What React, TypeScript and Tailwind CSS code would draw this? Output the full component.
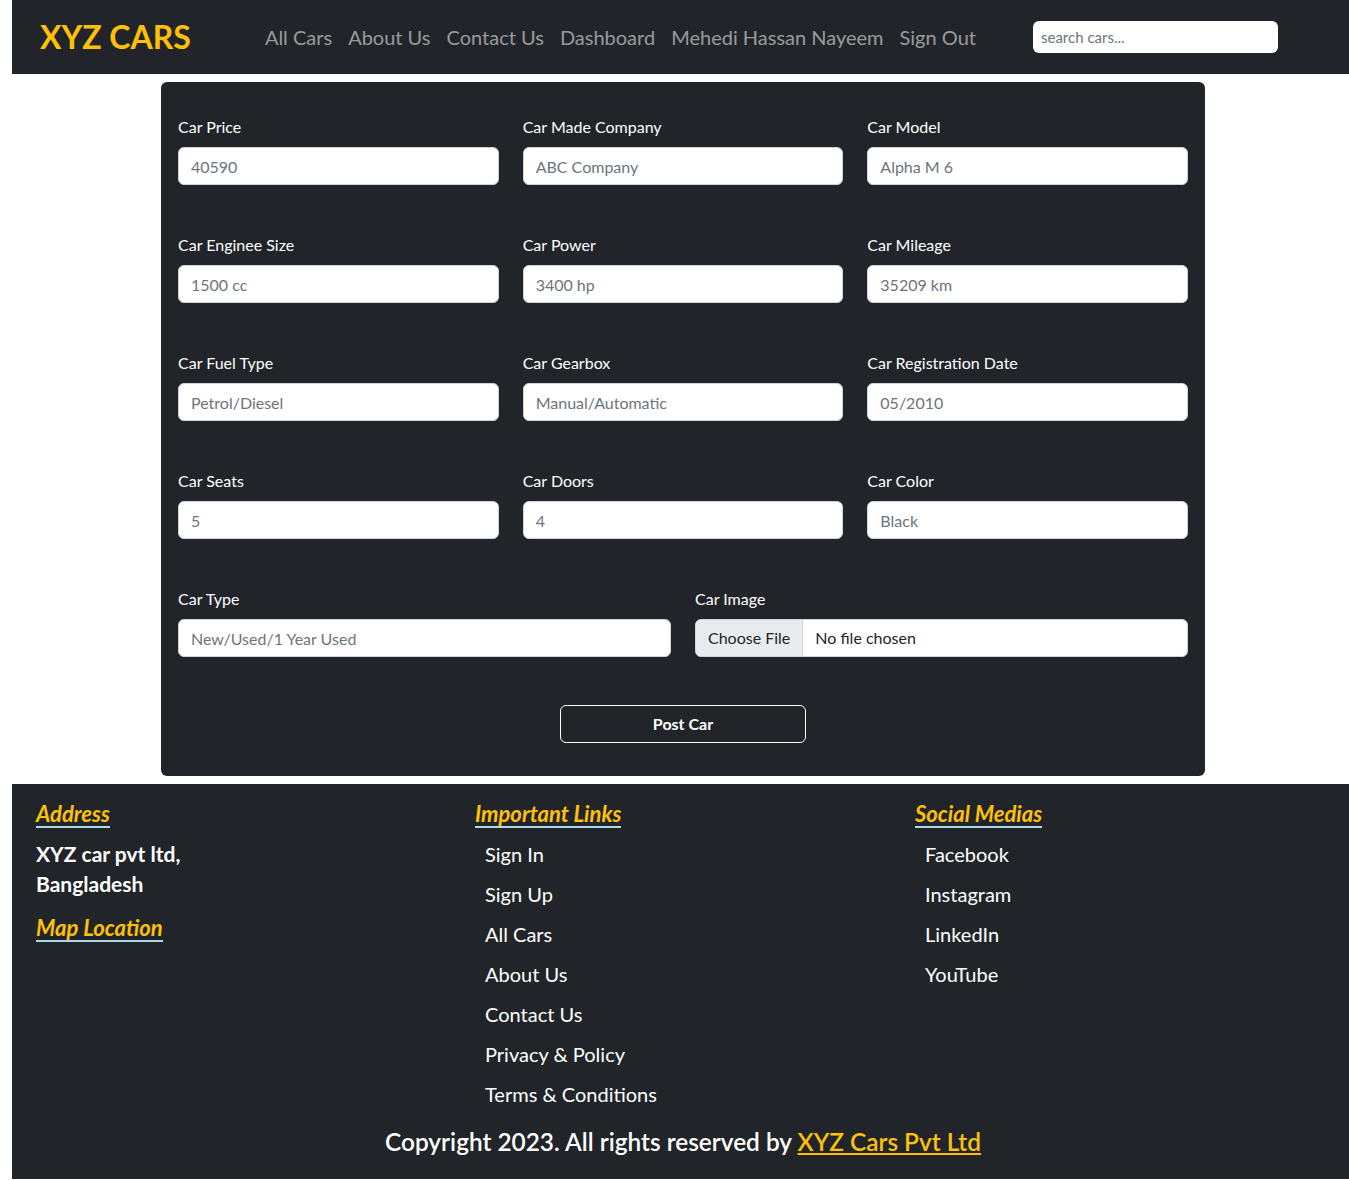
import React from "react";

const fields = [
  ["Car Price", "40590"],
  ["Car Made Company", "ABC Company"],
  ["Car Model", "Alpha M 6"],
  ["Car Enginee Size", "1500 cc"],
  ["Car Power", "3400 hp"],
  ["Car Mileage", "35209 km"],
  ["Car Fuel Type", "Petrol/Diesel"],
  ["Car Gearbox", "Manual/Automatic"],
  ["Car Registration Date", "05/2010"],
  ["Car Seats", "5"],
  ["Car Doors", "4"],
  ["Car Color", "Black"],
];

const navLinks = ["All Cars", "About Us", "Contact Us", "Dashboard", "Mehedi Hassan Nayeem", "Sign Out"];
const importantLinks = ["Sign In", "Sign Up", "All Cars", "About Us", "Contact Us", "Privacy & Policy", "Terms & Conditions"];
const socialLinks = ["Facebook", "Instagram", "LinkedIn", "YouTube"];

function Field({ label, placeholder }: { label: string; placeholder: string }) {
  return (
    <div className="flex flex-col">
      <label className="text-[16px] leading-[24px] text-white mb-2">{label}</label>
      <input
        placeholder={placeholder}
        className="h-[38px] w-full rounded-[6px] border border-[#ced4da] bg-white px-3 text-[16px] text-[#212529] placeholder:text-[#6c757d] outline-none"
      />
    </div>
  );
}

function FooterHeading({ children }: { children: React.ReactNode }) {
  return (
    <div>
      <h3 className="inline-block border-b-2 border-[#add8e6] text-[22px] leading-[25px] font-bold italic text-[#ffc107]">
        {children}
      </h3>
    </div>
  );
}

export default function App() {
  return (
    <div className="overflow-hidden bg-white font-['Lato','Liberation_Sans',sans-serif]">
      <div className="pl-[12px]">
        <div className="w-[1342px]">
          {/* navbar */}
          <nav className="h-[74px] bg-[#212529] flex items-center">
            <a className="ml-[28px] text-[32px] font-bold text-[#ffc107] leading-none">XYZ CARS</a>
            <div className="ml-[66px] flex items-center pb-[1px]">
              {navLinks.map((l) => (
                <a key={l} className="px-2 text-[20px] text-[#ffffff8c]">
                  {l}
                </a>
              ))}
            </div>
            <input
              placeholder="search cars..."
              className="ml-auto mr-[76px] h-[32px] w-[245px] rounded-[6px] bg-white px-2 text-[15px] text-[#212529] placeholder:text-[#6c757d] outline-none"
            />
          </nav>

          {/* form */}
          <form className="mx-auto mt-[8px] w-[1044px] rounded-[6px] bg-[#212529] px-[17px] pt-[33px] pb-[33px]">
            <div className="grid grid-cols-3 gap-x-6 gap-y-12">
              {fields.map(([l, p]) => (
                <Field key={l} label={l} placeholder={p} />
              ))}
            </div>
            <div className="mt-12 grid grid-cols-2 gap-x-6">
              <Field label="Car Type" placeholder="New/Used/1 Year Used" />
              <div className="flex flex-col">
                <label className="text-[16px] leading-[24px] text-white mb-2">Car Image</label>
                <div className="flex h-[38px] w-full overflow-hidden rounded-[6px] border border-[#ced4da] bg-white text-[16px] text-[#212529]">
                  <span className="flex items-center bg-[#e9ecef] border-r border-[#ced4da] px-3">Choose File</span>
                  <span className="flex items-center px-3">No file chosen</span>
                </div>
              </div>
            </div>
            <div className="mt-12 flex justify-center">
              <button
                type="button"
                className="h-[38px] w-[246px] rounded-[6px] border border-white text-[16px] font-bold text-white"
              >
                Post Car
              </button>
            </div>
          </form>

          {/* footer */}
          <footer className="mt-[8px] bg-[#212529] pt-[17px] pb-[19px]">
            <div className="grid grid-cols-[439px_440px_440px] pl-[24px]">
              <div>
                <FooterHeading>Address</FooterHeading>
                <p className="mt-[11px] text-[21px] leading-[30px] font-bold text-white">
                  XYZ car pvt ltd,
                  <br />
                  Bangladesh
                </p>
                <div className="mt-[16px]">
                  <FooterHeading>Map Location</FooterHeading>
                </div>
              </div>
              <div>
                <FooterHeading>Important Links</FooterHeading>
                <ul className="mt-[6px] pl-[10px]">
                  {importantLinks.map((l) => (
                    <li key={l} className="text-[20px] leading-[40px] text-white">
                      {l}
                    </li>
                  ))}
                </ul>
              </div>
              <div>
                <FooterHeading>Social Medias</FooterHeading>
                <ul className="mt-[6px] pl-[10px]">
                  {socialLinks.map((l) => (
                    <li key={l} className="text-[20px] leading-[40px] text-white">
                      {l}
                    </li>
                  ))}
                </ul>
              </div>
            </div>
            <p className="mt-[10px] text-center text-[24.4px] leading-[36px] font-semibold text-white">
              Copyright 2023. All rights reserved by{" "}
              <a className="text-[#ffc107] underline">XYZ Cars Pvt Ltd</a>
            </p>
          </footer>
        </div>
      </div>
    </div>
  );
}
